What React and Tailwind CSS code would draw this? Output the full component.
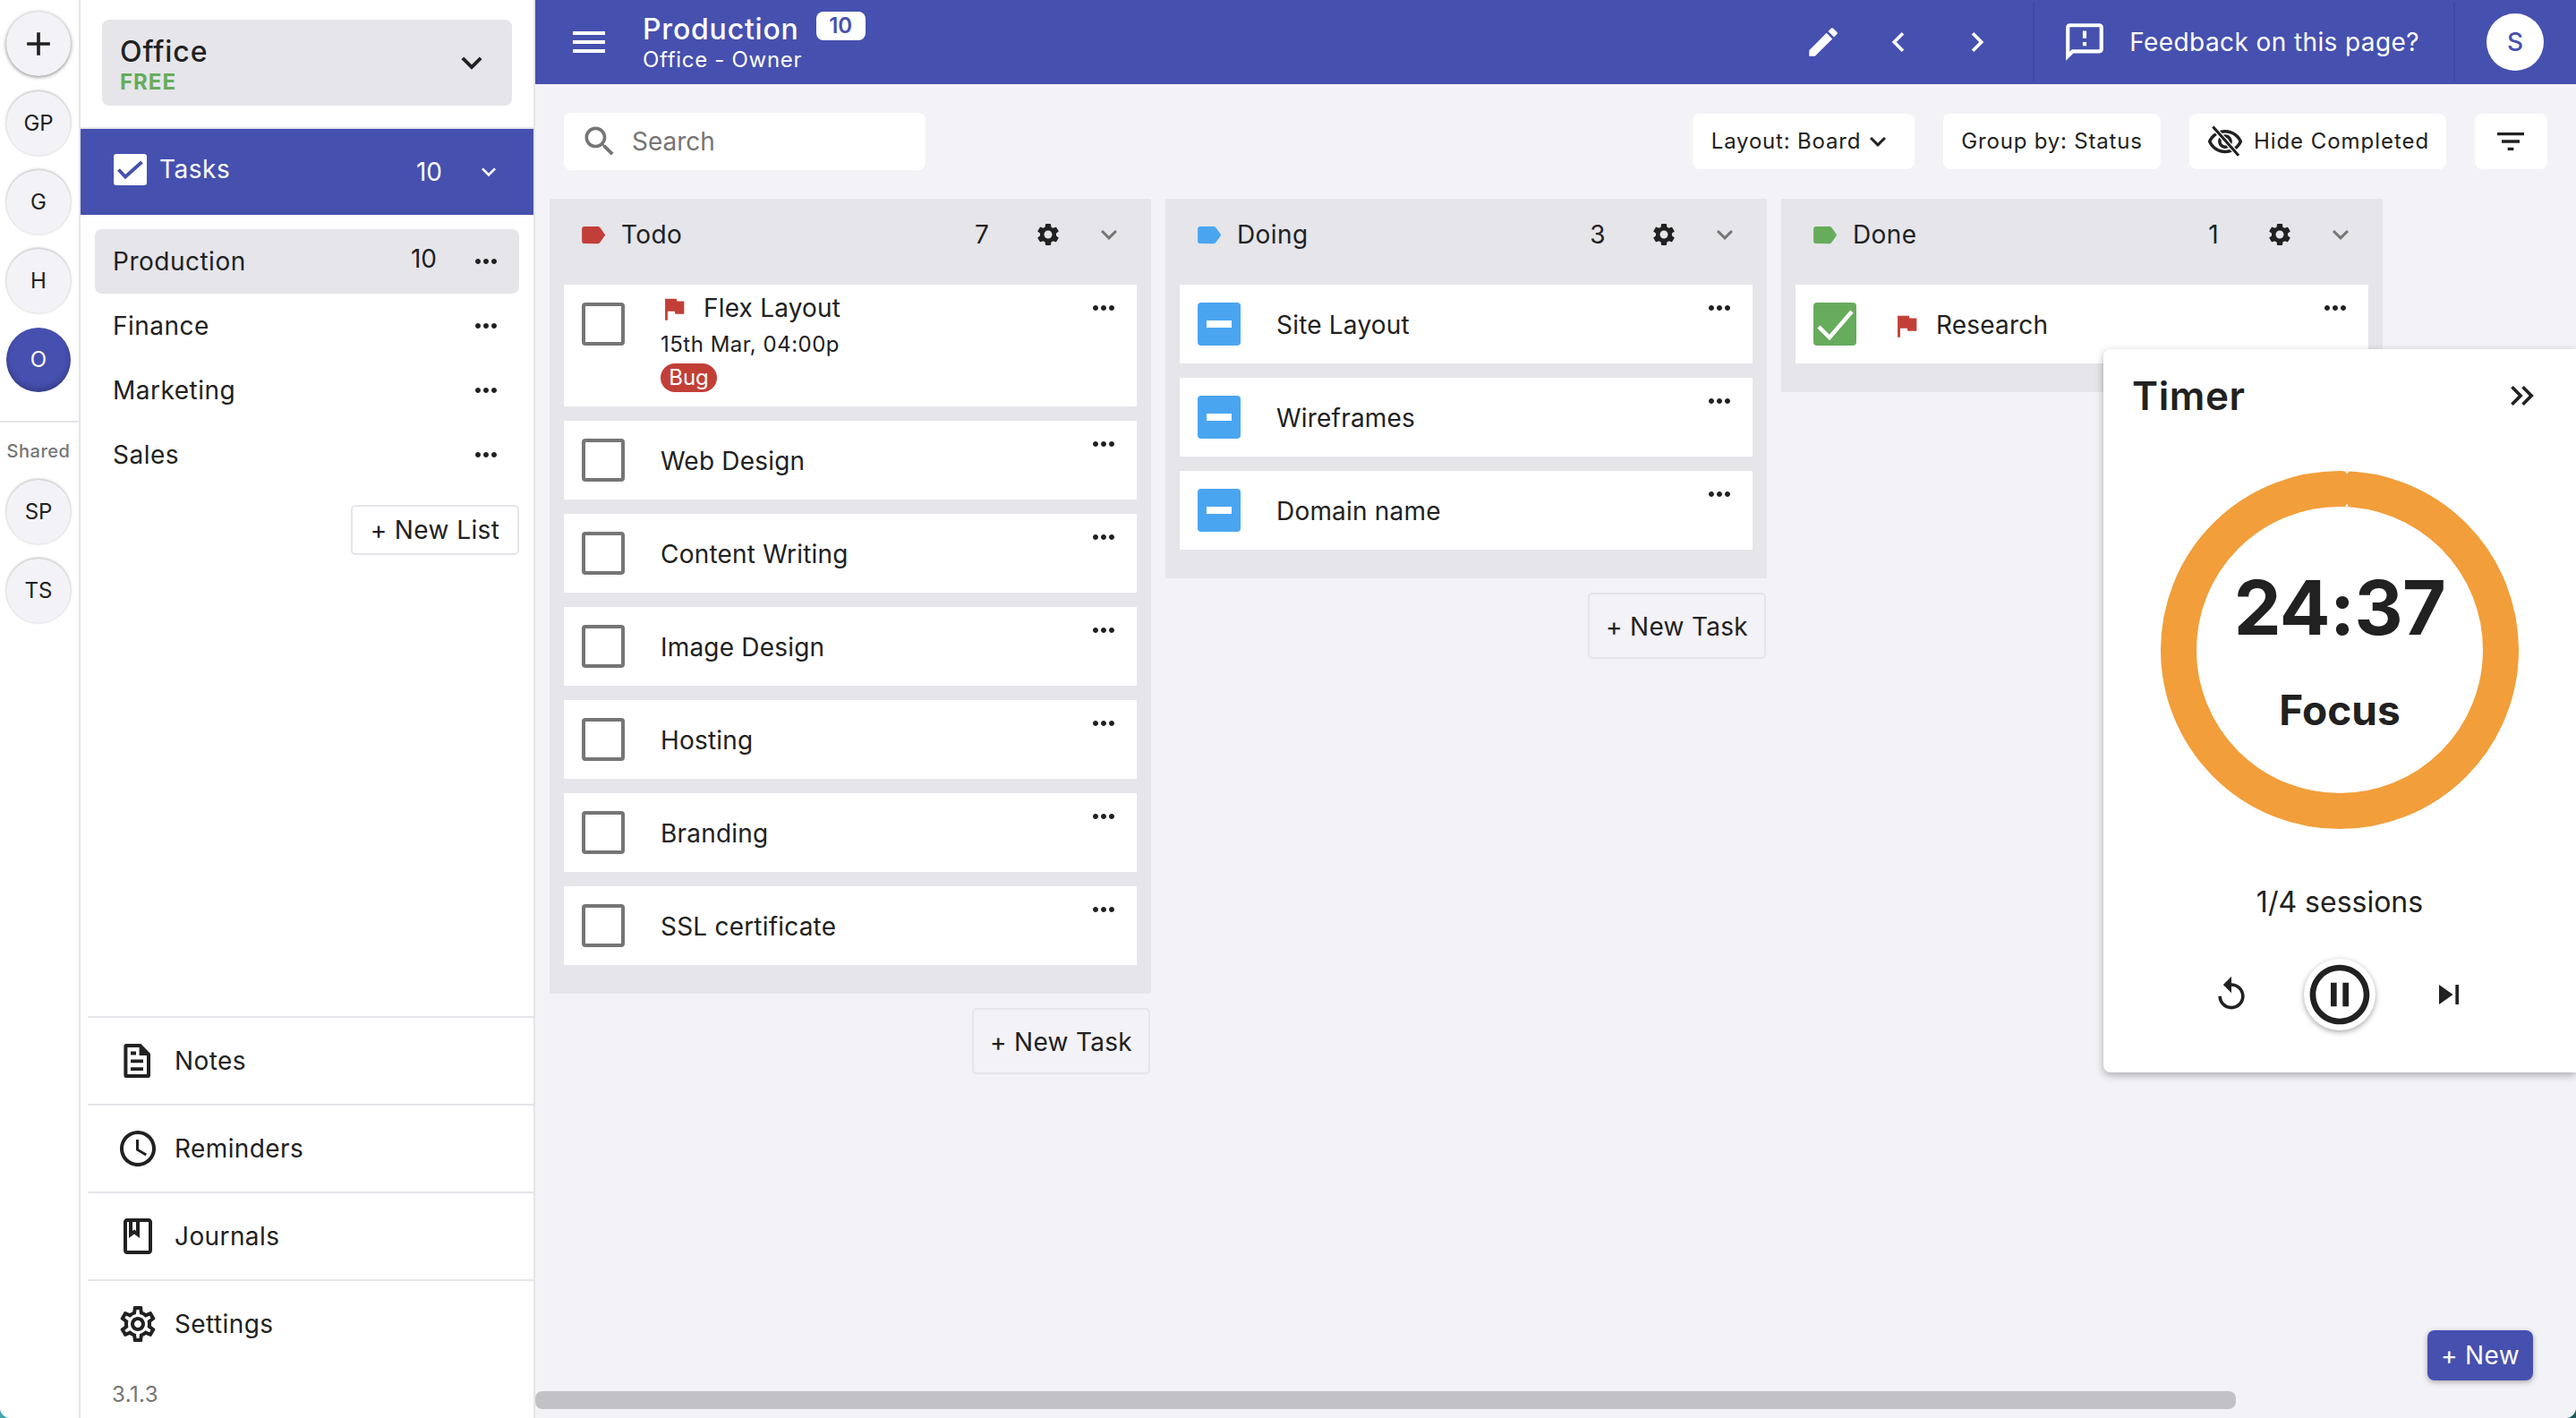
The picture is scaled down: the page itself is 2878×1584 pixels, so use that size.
const P = {
  menu: 'M3 18h18v-2H3v2zm0-5h18v-2H3v2zm0-7v2h18V6H3z',
  down: 'M16.59 8.59 12 13.17 7.41 8.59 6 10l6 6 6-6z',
  dots: 'M6 10c-1.1 0-2 .9-2 2s.9 2 2 2 2-.9 2-2-.9-2-2-2zm12 0c-1.1 0-2 .9-2 2s.9 2 2 2 2-.9 2-2-.9-2-2-2zm-6 0c-1.1 0-2 .9-2 2s.9 2 2 2 2-.9 2-2-.9-2-2-2z',
  edit: 'M3 17.25V21h3.75L17.81 9.94l-3.75-3.75L3 17.25zM20.71 7.04c.39-.39.39-1.02 0-1.41l-2.34-2.34c-.39-.39-1.02-.39-1.41 0l-1.83 1.83 3.75 3.75 1.83-1.83z',
  feedback: 'M20 2H4c-1.1 0-1.99.9-1.99 2L2 22l4-4h14c1.1 0 2-.9 2-2V4c0-1.1-.9-2-2-2zm0 14H5.17L4 17.17V4h16v12zm-9-4h2v2h-2zm0-6h2v4h-2z',
  eye: 'M12 6.5c3.79 0 7.17 2.13 8.82 5.5-1.65 3.37-5.02 5.5-8.82 5.5S4.83 15.37 3.18 12C4.83 8.63 8.21 6.5 12 6.5m0-2C7 4.5 2.73 7.61 1 12c1.73 4.39 6 7.5 11 7.5s9.27-3.11 11-7.5c-1.73-4.39-6-7.5-11-7.5zm0 5c1.38 0 2.5 1.12 2.5 2.5s-1.12 2.5-2.5 2.5-2.5-1.12-2.5-2.5 1.12-2.5 2.5-2.5m0-2c-2.48 0-4.5 2.02-4.5 4.5s2.02 4.5 4.5 4.5 4.5-2.02 4.5-4.5-2.02-4.5-4.5-4.5z',
  filter: 'M10 18h4v-2h-4v2zM3 6v2h18V6H3zm3 7h12v-2H6v2z',
  search: 'M15.5 14h-.79l-.28-.27C15.41 12.59 16 11.11 16 9.5 16 5.91 13.09 3 9.5 3S3 5.91 3 9.5 5.91 16 9.5 16c1.61 0 3.09-.59 4.23-1.57l.27.28v.79l5 4.99L20.49 19l-4.99-5zm-6 0C7.01 14 5 11.99 5 9.5S7.01 5 9.5 5 14 7.01 14 9.5 11.99 14 9.5 14z',
  gear: 'M19.14 12.94c.04-.3.06-.61.06-.94 0-.32-.02-.64-.07-.94l2.03-1.58c.18-.14.23-.41.12-.61l-1.92-3.32c-.12-.22-.37-.29-.59-.22l-2.39.96c-.5-.38-1.03-.7-1.62-.94l-.36-2.54c-.04-.24-.24-.41-.48-.41h-3.84c-.24 0-.43.17-.47.41l-.36 2.54c-.59.24-1.13.57-1.62.94l-2.39-.96c-.22-.08-.47 0-.59.22L2.74 8.87c-.12.21-.08.47.12.61l2.03 1.58c-.05.3-.09.63-.09.94s.02.64.07.94l-2.03 1.58c-.18.14-.23.41-.12.61l1.92 3.32c.12.22.37.29.59.22l2.39-.96c.5.38 1.03.7 1.62.94l.36 2.54c.05.24.24.41.48.41h3.84c.24 0 .44-.17.47-.41l.36-2.54c.59-.24 1.13-.56 1.62-.94l2.39.96c.22.08.47 0 .59-.22l1.92-3.32c.12-.22.07-.47-.12-.61l-2.01-1.58zM12 15.6c-1.98 0-3.6-1.62-3.6-3.6s1.62-3.6 3.6-3.6 3.6 1.62 3.6 3.6-1.62 3.6-3.6 3.6z',
  gearO: 'M19.43 12.98c.04-.32.07-.64.07-.98 0-.34-.03-.66-.07-.98l2.11-1.65c.19-.15.24-.42.12-.64l-2-3.46c-.09-.16-.26-.25-.44-.25-.06 0-.12.01-.17.03l-2.49 1c-.52-.4-1.08-.73-1.69-.98l-.38-2.65C14.46 2.18 14.25 2 14 2h-4c-.25 0-.46.18-.49.42l-.38 2.65c-.61.25-1.17.59-1.69.98l-2.49-1c-.06-.02-.12-.03-.18-.03-.17 0-.34.09-.43.25l-2 3.46c-.13.22-.07.49.12.64l2.11 1.65c-.04.32-.07.65-.07.98 0 .33.03.66.07.98l-2.11 1.65c-.19.15-.24.42-.12.64l2 3.46c.09.16.26.25.44.25.06 0 .12-.01.17-.03l2.49-1c.52.4 1.08.73 1.69.98l.38 2.65c.03.24.24.42.49.42h4c.25 0 .46-.18.49-.42l.38-2.65c.61-.25 1.17-.59 1.69-.98l2.49 1c.06.02.12.03.18.03.17 0 .34-.09.43-.25l2-3.46c.12-.22.07-.49-.12-.64l-2.11-1.65zm-1.98-1.71c.04.31.05.52.05.73 0 .21-.02.43-.05.73l-.14 1.13.89.7 1.08.84-.7 1.21-1.27-.51-1.04-.42-.9.68c-.43.32-.84.56-1.25.73l-1.06.43-.16 1.13-.2 1.35h-1.4l-.19-1.35-.16-1.13-1.06-.43c-.43-.18-.83-.41-1.23-.71l-.91-.7-1.06.43-1.27.51-.7-1.21 1.08-.84.89-.7-.14-1.13c-.03-.31-.05-.54-.05-.74s.02-.43.05-.73l.14-1.13-.89-.7-1.08-.84.7-1.21 1.27.51 1.04.42.9-.68c.43-.32.84-.56 1.25-.73l1.06-.43.16-1.13.2-1.35h1.39l.19 1.35.16 1.13 1.06.43c.43.18.83.41 1.23.71l.91.7 1.06-.43 1.27-.51.7 1.21-1.07.85-.89.7.14 1.13zM12 8c-2.21 0-4 1.79-4 4s1.79 4 4 4 4-1.79 4-4-1.79-4-4-4zm0 6c-1.1 0-2-.9-2-2s.9-2 2-2 2 .9 2 2-.9 2-2 2z',
  note: 'M5.5 2.5h8.2L19 8v12.2c0 .7-.6 1.3-1.3 1.3H5.5c-.7 0-1.3-.6-1.3-1.3V3.8c0-.7.6-1.3 1.3-1.3zm.7 2v15h10.8V9h-4.2V4.5H6.2zM8 6.8h3v1.9H8zM8 11.2h7v1.9H8zM8 15.6h7v1.9H8z',
  clock: 'M11.99 2C6.47 2 2 6.48 2 12s4.47 10 9.99 10C17.52 22 22 17.52 22 12S17.52 2 11.99 2zM12 20c-4.42 0-8-3.58-8-8s3.58-8 8-8 8 3.58 8 8-3.58 8-8 8zm.5-13H11v6l5.25 3.15.75-1.23-4.5-2.67z',
  book: 'M18 2H6c-1.1 0-2 .9-2 2v16c0 1.1.9 2 2 2h12c1.1 0 2-.9 2-2V4c0-1.1-.9-2-2-2zM9 4h2v5l-1-.75L9 9V4zm9 16H6V4h1v9l3-2.25L13 13V4h5v16z',
  flag: 'M14.4 6 14 4H5v17h2v-7h5.6l.4 2h7V6z',
  label: 'M17.63 5.84C17.27 5.33 16.67 5 16 5L5 5.01C3.9 5.01 3 5.9 3 7v10c0 1.1.9 1.99 2 1.99L16 19c.67 0 1.27-.33 1.63-.84L22 12l-4.37-6.16z',
  left: 'M15.41 7.41 14 6l-6 6 6 6 1.41-1.41L10.83 12z',
  right: 'M10 6 8.59 7.41 13.17 12l-4.58 4.59L10 18l6-6z',
  dbl: 'M6.41 6 5 7.41 9.58 12 5 16.59 6.41 18l6-6zM13 6l-1.41 1.41L16.17 12l-4.58 4.59L13 18l6-6z',
  replay: 'M12 5V1L7 6l5 5V7c3.31 0 6 2.69 6 6s-2.69 6-6 6-6-2.69-6-6H4c0 4.42 3.58 8 8 8s8-3.58 8-8-3.58-8-8-8z',
  skip: 'M6 18l8.5-6L6 6v12zM16 6v12h2V6h-2z',
  pause: 'M9 16h2V8H9v8zm3-14C6.48 2 2 6.48 2 12s4.48 10 10 10 10-4.48 10-10S17.52 2 12 2zm0 18c-4.41 0-8-3.59-8-8s3.59-8 8-8 8 3.59 8 8-3.59 8-8 8zm1-4h2V8h-2v8z',
  plus: 'M19 13h-6v6h-2v-6H5v-2h6V5h2v6h6v2z',
};

function Icon({ d, className = '' }) {
  return (
    <svg viewBox="0 0 24 24" fill="currentColor" className={`shrink-0 ${className}`}>
      <path d={d} />
    </svg>
  );
}

function Avatar({ children, active }) {
  return (
    <div
      className={`flex h-[72px] w-[72px] shrink-0 items-center justify-center rounded-full text-[24px] ${
        active
          ? 'bg-[#4650af] text-white shadow-[inset_0_-4px_6px_rgba(0,0,0,0.22)]'
          : 'bg-[#f2f2f7] text-[#212121] shadow-[0_-1px_3px_rgba(0,0,0,0.28),0_1px_2px_rgba(0,0,0,0.06)]'
      }`}
    >
      {children}
    </div>
  );
}

function Rail() {
  return (
    <div className="flex w-[90px] shrink-0 flex-col items-center border-r-2 border-[#e5e5ea] bg-white pt-[13px]">
      <div className="mr-[2px] flex h-[72px] w-[72px] shrink-0 items-center justify-center rounded-full bg-[#f2f2f7] text-[#212121] shadow-[0_1px_4px_rgba(0,0,0,0.5)]">
        <Icon d={P.plus} className="h-[44px] w-[44px]" />
      </div>
      <div className="mr-[2px] mt-[17px] flex flex-col gap-4">
        <Avatar>GP</Avatar>
        <Avatar>G</Avatar>
        <Avatar>H</Avatar>
        <Avatar active>O</Avatar>
      </div>
      <div className="mt-[32px] h-[2px] w-full bg-[#e5e5ea]" />
      <div className="mr-[2px] mt-[20px] h-[24px] text-[20px] font-medium leading-[24px] tracking-[0.5px] text-[#757575]">Shared</div>
      <div className="mr-[2px] mt-[20px] flex flex-col gap-4">
        <Avatar>SP</Avatar>
        <Avatar>TS</Avatar>
      </div>
    </div>
  );
}

function ListRow({ name, count, active }) {
  return (
    <div className={`flex h-[72px] items-center rounded-lg pl-[20px] pr-[19px] ${active ? 'bg-[#e5e5ea]' : ''}`}>
      <span className="text-[28px] tracking-[0.5px] text-[#212121]">{name}</span>
      {count && <span className="ml-auto mb-[6px] text-[28px] text-[#212121]">{count}</span>}
      <Icon d={P.dots} className={`h-[36px] w-[36px] text-[#212121] ${count ? 'ml-[37px]' : 'ml-auto'}`} />
    </div>
  );
}

function NavRow({ d, label }) {
  return (
    <div className="ml-2 flex h-[98px] items-center border-t-2 border-[#e5e5ea] pl-[32px]">
      <Icon d={d} className="h-[48px] w-[48px] text-[#212121]" />
      <span className="ml-[17px] text-[28px] tracking-[0.4px] text-[#212121]">{label}</span>
    </div>
  );
}

function Sidebar() {
  return (
    <div className="flex w-[508px] shrink-0 flex-col border-r-2 border-[#e5e5ea] bg-white">
      <div className="ml-6 mt-[22px] flex h-[96px] w-[458px] items-center rounded-lg bg-[#e5e5ea] pl-[20px] pr-[22px]">
        <div className="flex flex-col pt-[7px]">
          <span className="text-[32px] font-medium leading-[36px] tracking-[0.9px] text-[#212121]">Office</span>
          <span className="text-[24px] font-bold leading-[32px] tracking-[1px] text-[#66ac5c]">FREE</span>
        </div>
        <Icon d={P.down} className="ml-auto h-[46px] w-[46px] text-[#212121]" />
      </div>
      <div className="mt-6 flex h-[98px] items-center border-t-2 border-[#e5e5ea] bg-[#4650af] pl-[37px] pr-[34px] text-white">
        <div className="mb-[6px] h-[35px] w-[37px] shrink-0 rounded-[3px] bg-white">
          <svg viewBox="0 0 37 35" className="h-[35px] w-[37px]">
            <path d="M5.5 17.5 13 25.5 31.5 9" fill="none" stroke="#4650af" strokeWidth="3.8" />
          </svg>
        </div>
        <span className="mb-[6px] ml-[14px] text-[28px] tracking-[0.5px]">Tasks</span>
        <span className="ml-auto text-[28px]">10</span>
        <Icon d={P.down} className="ml-[36px] h-[32px] w-[32px]" />
      </div>
      <div className="ml-4 mt-4 flex w-[474px] flex-col">
        <ListRow name="Production" count="10" active />
        <ListRow name="Finance" />
        <ListRow name="Marketing" />
        <ListRow name="Sales" />
        <button className="mt-[20px] flex h-[56px] w-[188px] items-center justify-center self-end rounded-[5px] border-2 border-[#e5e5ea] bg-white text-[28px] tracking-[0.4px] text-[#212121]">
          + New List
        </button>
      </div>
      <div className="flex-1" />
      <NavRow d={P.note} label="Notes" />
      <NavRow d={P.clock} label="Reminders" />
      <NavRow d={P.book} label="Journals" />
      <NavRow d={P.gearO} label="Settings" />
      <div className="mb-[12px] ml-[35px] mt-[17px] text-[24px] leading-[28px] tracking-[0.4px] text-[#757575]">3.1.3</div>
    </div>
  );
}

function Header() {
  return (
    <div className="flex h-[94px] shrink-0 items-center bg-[#4650af] text-white">
      <Icon d={P.menu} className="ml-[36px] h-[48px] w-[48px]" />
      <div className="ml-[36px] mt-[-3px] flex flex-col">
        <div className="flex items-start">
          <span className="mt-[1px] text-[32px] font-medium leading-[40px] tracking-[0.8px]">Production</span>
          <span className="ml-[19px] mt-[1px] flex h-[32px] w-[55px] items-center justify-center rounded-lg bg-white text-[24px] font-semibold text-[#4650af]">10</span>
        </div>
        <span className="text-[24px] leading-[27px] tracking-[0.7px]">Office - Owner</span>
      </div>
      <Icon d={P.edit} className="ml-auto h-[42px] w-[42px]" />
      <Icon d={P.left} className="ml-[41px] h-[44px] w-[44px]" />
      <Icon d={P.right} className="ml-[44px] h-[44px] w-[44px]" />
      <div className="ml-[40px] h-[88px] w-[2px] bg-[#3f48a0]" />
      <Icon d={P.feedback} className="ml-[31px] h-[50px] w-[50px]" />
      <span className="ml-[25px] text-[28px] tracking-[0.4px]">Feedback on this page?</span>
      <div className="ml-[38px] h-[88px] w-[2px] bg-[#3f48a0]" />
      <div className="ml-[35px] mr-[36px] flex h-[64px] w-[64px] items-center justify-center rounded-full bg-white text-[28px] font-medium text-[#4650af]">S</div>
    </div>
  );
}

function ToolButton({ w, children }) {
  return (
    <div className={`flex h-[62px] items-center justify-center rounded-lg bg-white text-[24px] tracking-[0.8px] text-[#212121] ${w}`}>
      {children}
    </div>
  );
}

function Toolbar() {
  return (
    <div className="flex h-[128px] shrink-0 items-center pl-[32px] pr-[32px]">
      <div className="flex h-[64px] w-[404px] items-center rounded-lg bg-white pl-[18px]">
        <Icon d={P.search} className="h-[44px] w-[44px] text-[#757575]" />
        <span className="ml-[14px] text-[28px] text-[#757575]">Search</span>
      </div>
      <div className="ml-auto flex items-center gap-8">
        <ToolButton w="w-[248px]">
          <span className="ml-[-2px]">Layout: Board</span>
          <Icon d={P.down} className="ml-[1px] h-[36px] w-[36px]" />
        </ToolButton>
        <ToolButton w="w-[243px]">Group by: Status</ToolButton>
        <ToolButton w="w-[287px]">
          <svg viewBox="0 0 24 24" className="mr-[11px] h-[42px] w-[42px] shrink-0">
            <path d={P.eye} fill="currentColor" />
            <path d="M4.2 2.6 20.6 21" stroke="#fff" strokeWidth="3.2" fill="none" />
            <path d="M4.2 2.6 20.6 21" stroke="currentColor" strokeWidth="1.8" fill="none" />
          </svg>
          <span className="tracking-[0.95px]">Hide Completed</span>
        </ToolButton>
        <ToolButton w="w-[81px]">
          <Icon d={P.filter} className="mr-[2px] h-[40px] w-[40px]" />
        </ToolButton>
      </div>
    </div>
  );
}

function Box({ status }) {
  if (status === 'doing')
    return (
      <div className="ml-5 mt-5 flex h-[48px] w-[48px] shrink-0 items-center justify-center rounded-[4px] bg-[#4aa5f0]">
        <div className="h-[8px] w-[28px] bg-white" />
      </div>
    );
  if (status === 'done')
    return (
      <div className="ml-5 mt-5 h-[48px] w-[48px] shrink-0 rounded-[4px] bg-[#66ac5c]">
        <svg viewBox="0 0 48 48" className="h-[48px] w-[48px]">
          <path d="M6 27 18 39 43 10" fill="none" stroke="#fff" strokeWidth="4.5" />
        </svg>
      </div>
    );
  return <div className="ml-5 mt-5 h-[48px] w-[48px] shrink-0 rounded-[4px] border-[4px] border-[#757575]" />;
}

function Card({ title, status, flag, extra }) {
  return (
    <div className={`flex shrink-0 bg-white ${extra ? 'h-[136px]' : 'h-[88px]'}`}>
      <Box status={status} />
      {extra ? (
        <div className="ml-[40px] flex flex-col">
          <div className="mt-[6px] flex h-[40px] items-center text-[28px] tracking-[0.2px] text-[#212121]">
            <Icon d={P.flag} className="ml-[-2px] mt-[1px] h-[34px] w-[34px] text-[#c23f38]" />
            <span className="ml-[16px]">{title}</span>
          </div>
          <span className="mt-[5px] text-[24px] leading-[32px] tracking-[0.5px] text-[#212121]">15th Mar, 04:00p</span>
          <span className="mt-[5px] flex h-[32px] w-[63px] items-center justify-center rounded-full bg-[#c23f38] text-[24px] leading-[32px] text-white">Bug</span>
        </div>
      ) : (
        <div className={`flex h-[88px] items-center pt-[2px] text-[28px] tracking-[0.2px] text-[#212121] ${flag ? 'ml-[39px]' : 'ml-[40px]'}`}>
          {flag && <Icon d={P.flag} className="mr-[16px] mt-[2px] h-[34px] w-[34px] text-[#c23f38]" />}
          <span>{title}</span>
        </div>
      )}
      <Icon d={P.dots} className="ml-auto mr-[19px] mt-2 h-[36px] w-[36px] text-[#212121]" />
    </div>
  );
}

function Column({ name, color, count, cards, newTask }) {
  return (
    <div className="flex w-[672px] shrink-0 flex-col">
      <div className="bg-[#e5e5ea]">
        <div className="flex h-[96px] items-center pb-4 pl-[32px] pr-[29px]">
          <Icon d={P.label} className={`h-[33px] w-[33px] ${color}`} />
          <span className="ml-[15px] text-[28px] tracking-[0.4px] text-[#212121]">{name}</span>
          <span className="ml-auto w-[32px] text-center text-[28px] text-[#212121]">{count}</span>
          <Icon d={P.gear} className="ml-[43px] h-[30px] w-[30px] text-[#212121]" />
          <Icon d={P.down} className="ml-[35px] h-[36px] w-[36px] text-[#757575]" />
        </div>
        <div className="flex flex-col gap-4 px-4 pb-8">{cards}</div>
      </div>
      {newTask && (
        <button className="mr-[1px] mt-4 flex h-[74px] w-[199px] items-center justify-center self-end rounded-[5px] border-2 border-[#e5e5ea] pt-[2px] text-[28px] tracking-[0.3px] text-[#212121]">
          + New Task
        </button>
      )}
    </div>
  );
}

function Timer() {
  return (
    <div className="absolute left-[1752px] top-[390px] flex h-[808px] w-[528px] flex-col items-center rounded-l-lg bg-white shadow-[0_3px_10px_rgba(0,0,0,0.3)]">
      <div className="flex h-[104px] w-full items-center pl-[32px] pr-[42px]">
        <span className="text-[44px] font-semibold tracking-[0.6px] text-[#212121]">Timer</span>
        <Icon d={P.dbl} className="ml-auto mr-[-4px] h-[44px] w-[44px] text-[#212121]" />
      </div>
      <div className="relative mt-[32px] h-[400px] w-[400px]">
        <svg viewBox="0 0 400 400" className="h-[400px] w-[400px]">
          <circle cx="200" cy="200" r="180" fill="none" stroke="#f29e3a" strokeWidth="40" />
          <path d="M205 0h6l-3 3.5z M205.5 40.6h5L208 36.5z" fill="#f0f0f2" />
        </svg>
        <div className="absolute inset-0 flex flex-col items-center">
          <span className="mt-[100px] text-[84px] font-bold leading-[106px] tracking-[-0.6px] text-[#212121]">24:37</span>
          <span className="mt-[33px] text-[46px] font-bold leading-[56px] text-[#212121]">Focus</span>
        </div>
      </div>
      <span className="mt-[60px] text-[32px] leading-[44px] text-[#212121]">1/4 sessions</span>
      <div className="mt-[41px] flex h-[80px] items-center text-[#212121]">
        <Icon d={P.replay} className="h-[44px] w-[44px]" />
        <div className="ml-[59px] flex h-[80px] w-[80px] items-center justify-center rounded-full bg-white shadow-[0_2px_6px_rgba(0,0,0,0.35)]">
          <Icon d={P.pause} className="h-[80px] w-[80px]" />
        </div>
        <Icon d={P.skip} className="ml-[60px] h-[44px] w-[44px]" />
      </div>
    </div>
  );
}

const todo = ['Web Design', 'Content Writing', 'Image Design', 'Hosting', 'Branding', 'SSL certificate'];

export default function App() {
  return (
    <div className="h-[1584px] w-[2878px] overflow-hidden bg-[linear-gradient(90deg,#45a5aa,#1f5a5a)] [font-family:Inter,sans-serif]">
      <div className="flex h-full w-full overflow-hidden rounded-b-[12px] bg-white">
        <Rail />
        <Sidebar />
        <div className="relative flex min-w-0 flex-1 flex-col bg-[#f2f2f7]">
          <Header />
          <Toolbar />
          <div className="flex items-start gap-4 pl-[16px]">
            <Column
              name="Todo"
              color="text-[#c23f38]"
              count="7"
              newTask
              cards={
                <>
                  <Card title="Flex Layout" extra />
                  {todo.map((t) => (
                    <Card key={t} title={t} />
                  ))}
                </>
              }
            />
            <Column
              name="Doing"
              color="text-[#4aa5f0]"
              count="3"
              newTask
              cards={
                <>
                  <Card title="Site Layout" status="doing" />
                  <Card title="Wireframes" status="doing" />
                  <Card title="Domain name" status="doing" />
                </>
              }
            />
            <Column
              name="Done"
              color="text-[#66ac5c]"
              count="1"
              cards={<Card title="Research" status="done" flag />}
            />
          </div>
          <Timer />
          <button className="absolute left-[2114px] top-[1486px] flex h-[56px] w-[118px] items-center justify-center rounded-lg bg-[#4650af] text-[28px] tracking-[0.4px] text-white shadow-[0_2px_6px_rgba(0,0,0,0.3)]">
            + New
          </button>
          <div className="absolute bottom-[10px] left-0 h-[20px] w-[1900px] rounded-lg bg-[#c2c1c6]" />
        </div>
      </div>
    </div>
  );
}
